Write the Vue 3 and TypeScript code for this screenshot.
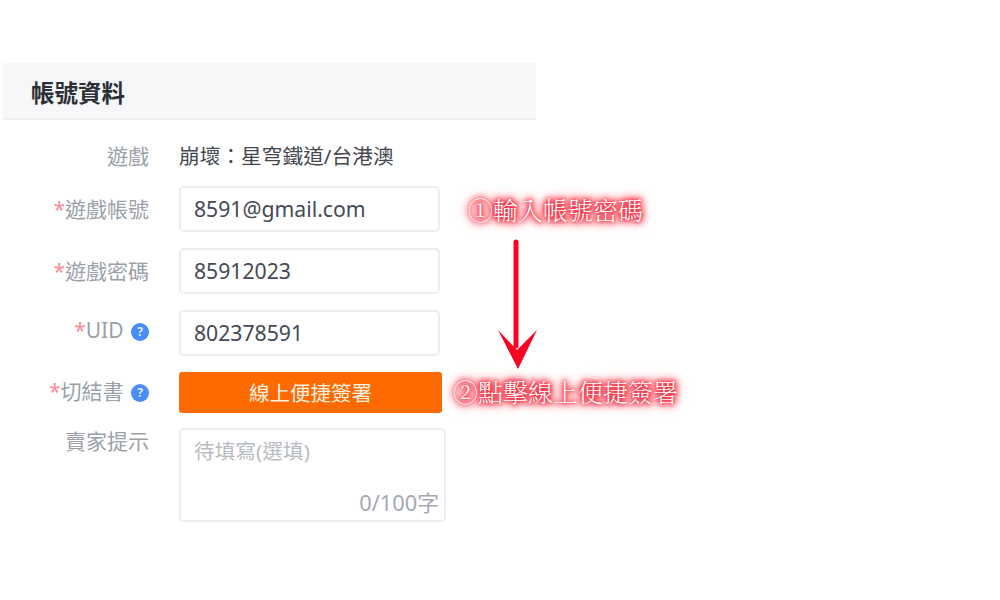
<script setup lang="ts">
interface Field {
  label: string
  value: string
  help?: boolean
}

const fields: Field[] = [
  { label: '遊戲帳號', value: '8591@gmail.com' },
  { label: '遊戲密碼', value: '85912023' },
  { label: 'UID', value: '802378591', help: true },
]
</script>

<template>
  <div class="page">
    <section class="panel">
      <h2 class="panel-title">帳號資料</h2>
      <div class="form">
        <div class="row game-row">
          <div class="label">遊戲</div>
          <div class="game-name">崩壞：星穹鐵道/台港澳</div>
        </div>
        <div v-for="f in fields" :key="f.label" class="row input-row" :class="{ 'has-help': f.help }">
          <div class="label">
            <span class="req">*</span>{{ f.label }}
            <span v-if="f.help" class="help">?</span>
          </div>
          <div class="input">{{ f.value }}</div>
        </div>
        <div class="row sign-row">
          <div class="label"><span class="req">*</span>切結書 <span class="help">?</span></div>
          <button class="sign-btn">線上便捷簽署</button>
        </div>
        <div class="row note-row">
          <div class="label">賣家提示</div>
          <div class="textarea">
            <span class="placeholder">待填寫(選填)</span>
            <span class="counter">0/100字</span>
          </div>
        </div>
      </div>
    </section>

    <div class="note note-one">①輸入帳號密碼</div>
    <svg class="arrow" width="60" height="140" viewBox="0 0 60 140">
      <path d="M19 4 L19 108" stroke="#ff0022" stroke-width="5" stroke-linecap="round" fill="none" />
      <path d="M1 92 L21 131 L40 92 L20 112 Z" fill="#ff0022" />
    </svg>
    <div class="note note-two">②點擊線上便捷簽署</div>
  </div>
</template>

<style>
html,
body {
  margin: 0;
  background: #fff;
}
</style>

<style scoped>
.page {
  position: relative;
  width: 1000px;
  height: 600px;
  padding: 63px 0 0 3px;
  box-sizing: border-box;
  overflow: hidden;
  background: #fff;
  font-family: "Noto Sans", "Noto Sans CJK TC", sans-serif;
}

.panel {
  width: 533px;
}

.panel-title {
  margin: 0;
  height: 57px;
  padding-left: 28px;
  box-sizing: border-box;
  line-height: 60px;
  background: #f6f7f9;
  border-bottom: 2px solid #eeeff1;
  font-size: 23.5px;
  font-weight: 700;
  color: #2c2f36;
}

.form {
  display: flex;
  flex-direction: column;
}

.row {
  display: grid;
  grid-template-columns: 146px 1fr;
  column-gap: 30px;
}

.label {
  text-align: right;
  font-size: 21px;
  color: #9a9fa8;
  white-space: nowrap;
}

.req {
  color: #ff8a9a;
}

.help {
  display: inline-block;
  width: 18px;
  height: 18px;
  margin-left: 2px;
  border-radius: 50%;
  background: #4b8df8;
  color: #dfeaff;
  font-size: 12px;
  font-weight: 700;
  line-height: 18px;
  text-align: center;
  vertical-align: 2px;
}

.game-row {
  height: 66px;
  align-items: center;
  padding-top: 3px;
  box-sizing: border-box;
}

.game-name {
  font-size: 20.7px;
  color: #45484f;
}

.input-row {
  height: 62px;
}

.input-row .label {
  line-height: 46px;
}

.input-row.has-help .label {
  line-height: 40px;
}

.input {
  width: 261px;
  height: 46px;
  box-sizing: border-box;
  padding-left: 13px;
  border: 2px solid #eceef1;
  border-radius: 5px;
  font-size: 21.2px;
  line-height: 42px;
  color: #454a55;
}

.sign-row {
  height: 56px;
}

.sign-row .label {
  line-height: 38px;
}

.sign-btn {
  width: 263px;
  height: 41px;
  border: 0;
  padding: 0 0 2px;
  border-radius: 3px;
  background: #ff6a00;
  color: #fff0e0;
  font-family: inherit;
  font-size: 20.5px;
}

.note-row .label {
  line-height: 26px;
}

.textarea {
  position: relative;
  width: 267px;
  height: 94px;
  box-sizing: border-box;
  padding: 7px 0 0 13px;
  border: 2px solid #eceef1;
  border-radius: 5px;
  font-size: 20.7px;
  line-height: 28px;
}

.placeholder {
  color: #b9bcc2;
}

.counter {
  position: absolute;
  right: 5px;
  bottom: 3px;
  font-size: 21.8px;
  color: #a4a9b3;
}

.note {
  position: absolute;
  font-family: "Noto Serif CJK TC", "Liberation Serif", "Noto Sans CJK TC", serif;
  font-size: 25px;
  font-weight: 300;
  line-height: 36px;
  color: #fff;
  white-space: nowrap;
  text-shadow:
    0 0 3px #f8283c,
    0 0 5px #f8283c,
    0 0 6px #f8283c,
    0 0 8px #f8283c,
    0 0 10px #ff4453,
    0 0 13px #ff6a75;
}

.note-one {
  left: 468px;
  top: 191px;
}

.note-two {
  left: 453px;
  top: 373px;
}

.arrow {
  position: absolute;
  left: 497px;
  top: 238px;
}
</style>
